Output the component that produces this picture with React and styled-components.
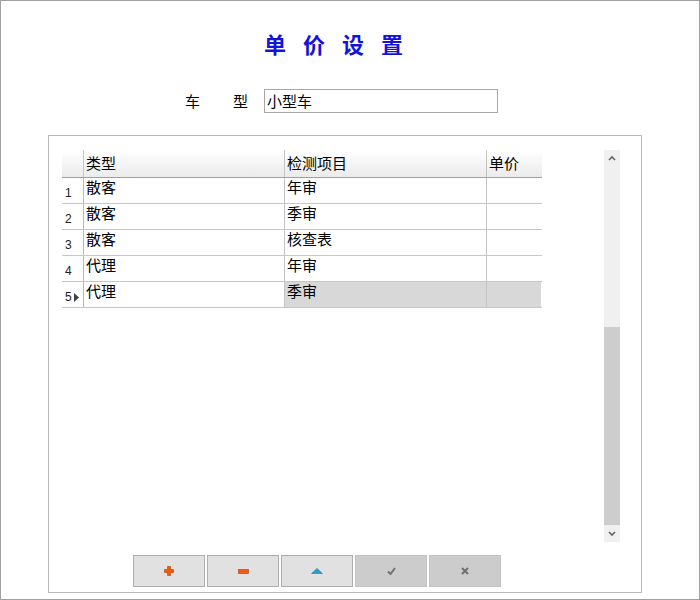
import React from 'react';
import styled, { createGlobalStyle } from 'styled-components';

const GlobalStyle = createGlobalStyle`
  html, body {
    margin: 0;
    padding: 0;
    background: #ffffff;
  }
  body {
    font-family: "Noto Sans CJK SC", "Liberation Sans", sans-serif;
    color: #000000;
  }
`;

const Page = styled.div`
  width: 700px;
  height: 600px;
  box-sizing: border-box;
  border: 1px solid #a0a0a0;
  background: #ffffff;
  display: flex;
  flex-direction: column;
`;

const Title = styled.h1`
  margin: 31px 0 0 263px;
  font-family: "Noto Sans CJK SC", sans-serif;
  font-size: 22px;
  line-height: 22px;
  font-weight: 700;
  letter-spacing: 6px;
  color: #1414d6;
  white-space: pre;
`;

const FormRow = styled.div`
  margin: 35px 0 0 184px;
  display: flex;
  align-items: center;
`;

const Label = styled.span`
  font-size: 15px;
  line-height: 18px;
  letter-spacing: 1px;
  width: 79px;
  white-space: pre;
`;

const TextInput = styled.div`
  box-sizing: border-box;
  width: 234px;
  height: 24px;
  border: 1px solid #a8a8a8;
  padding: 0 2px;
  font-size: 15px;
  line-height: 21px;
`;

const Panel = styled.div`
  margin: 22px 0 0 47px;
  width: 594px;
  height: 458px;
  box-sizing: border-box;
  border: 1px solid #b9b9b9;
  padding: 14px 21px 5px 13px;
  display: flex;
  flex-direction: column;
`;

const GridArea = styled.div`
  display: flex;
  height: 392px;
`;

const GridBody = styled.div`
  flex: 1;
`;

const Row = styled.div`
  display: flex;
  width: 480px;
  height: ${p => (p.$header ? 27 : 25)}px;
  border-bottom: 1px solid ${p => (p.$header ? '#a0a0a0' : '#c6c6c6')};
  background: ${p => (p.$header ? 'linear-gradient(#ffffff, #ebebeb)' : '#ffffff')};
`;

const Indicator = styled.div`
  width: 22px;
  flex-shrink: 0;
  border-right: 1px solid ${p => (p.$header ? '#c8c8c8' : '#b8b8b8')};
  display: flex;
  align-items: flex-end;
  padding: 0 0 4px 3px;
  box-sizing: border-box;
  font-family: "Liberation Sans", sans-serif;
  font-size: 12px;
  line-height: 12px;
  color: #202020;
  gap: 2px;
`;

const Cell = styled.div`
  width: ${p => p.$w}px;
  flex-shrink: 0;
  box-sizing: border-box;
  border-right: ${p => (p.$last ? 'none' : '1px solid #c4c4c4')};
  background: ${p => (p.$selected ? '#d8d8d8' : 'transparent')};
  padding: ${p => (p.$header ? '4px 0 0 2px' : '0 0 0 2px')};
  font-size: 15px;
  line-height: 18px;
  white-space: nowrap;
`;

const ScrollBar = styled.div`
  width: 16px;
  background: #f0f0f0;
  display: flex;
  flex-direction: column;
`;

const ScrollArrow = styled.div`
  height: 17px;
  display: flex;
  align-items: center;
  justify-content: center;
`;

const ScrollSpace = styled.div`
  flex: 1;
`;

const ScrollThumb = styled.div`
  height: 198px;
  background: #cdcdcd;
`;

const ButtonBar = styled.div`
  margin: 13px 0 0 71px;
  display: flex;
  gap: 2px;
`;

const ToolButton = styled.button`
  width: 72px;
  height: 32px;
  box-sizing: border-box;
  margin: 0;
  padding: 0;
  border: 1px solid ${p => (p.disabled ? '#c2c2c2' : '#adadad')};
  background: ${p => (p.disabled ? '#cccccc' : '#e1e1e1')};
  display: flex;
  align-items: center;
  justify-content: center;
`;

const Chevron = ({ down }) => (
  <svg width="8" height="5" viewBox="0 0 8 5">
    <polyline
      points={down ? '1,1 4,4 7,1' : '1,4 4,1 7,4'}
      fill="none"
      stroke="#606060"
      strokeWidth="1.6"
    />
  </svg>
);

const PlusIcon = () => (
  <svg width="10" height="10" viewBox="0 0 10 10">
    <path d="M3.5 0.5h3v3h3v3h-3v3h-3v-3h-3v-3h3z" fill="#f05a10" stroke="#c03a00" strokeWidth="0.6" />
  </svg>
);

const MinusIcon = () => (
  <svg width="11" height="5" viewBox="0 0 11 5">
    <rect x="0.5" y="0.5" width="10" height="4" fill="#f05a10" stroke="#c03a00" strokeWidth="0.6" />
  </svg>
);

const UpIcon = () => (
  <svg width="12" height="6" viewBox="0 0 12 6">
    <path d="M0.5 5.5L6 0.5L11.5 5.5z" fill="#2aa0c8" stroke="#1a7fa4" strokeWidth="0.6" />
  </svg>
);

const CheckIcon = () => (
  <svg width="9" height="8" viewBox="0 0 9 8">
    <polyline points="1,4.5 3.5,7 8,1" fill="none" stroke="#707070" strokeWidth="2" />
  </svg>
);

const CrossIcon = () => (
  <svg width="8" height="8" viewBox="0 0 8 8">
    <path d="M1 1L7 7M7 1L1 7" stroke="#707070" strokeWidth="2" />
  </svg>
);

const rows = [
  ['散客', '年审', ''],
  ['散客', '季审', ''],
  ['散客', '核查表', ''],
  ['代理', '年审', ''],
  ['代理', '季审', ''],
];

const widths = [201, 202, 54];

export default function App() {
  const current = 4;

  return (
    <Page>
      <GlobalStyle />
      <Title>{'单 价 设 置'}</Title>
      <FormRow>
        <Label>{'车　　型'}</Label>
        <TextInput>{'小型车'}</TextInput>
      </FormRow>
      <Panel>
        <GridArea>
          <GridBody>
            <Row $header>
              <Indicator $header />
              <Cell $header $w={widths[0]}>{'类型'}</Cell>
              <Cell $header $w={widths[1]}>{'检测项目'}</Cell>
              <Cell $header $last $w={widths[2]}>{'单价'}</Cell>
            </Row>
            {rows.map((r, i) => (
              <Row key={i}>
                <Indicator>
                  <span>{i + 1}</span>
                  {i === current && (
                    <svg width="5" height="9" viewBox="0 0 5 9" style={{ marginBottom: '1px' }}>
                      <path d="M0 0L5 4.5L0 9z" fill="#404040" />
                    </svg>
                  )}
                </Indicator>
                <Cell $w={widths[0]}>{r[0]}</Cell>
                <Cell $w={widths[1]} $selected={i === current}>{r[1]}</Cell>
                <Cell $last $w={widths[2]} $selected={i === current}>{r[2]}</Cell>
              </Row>
            ))}
          </GridBody>
          <ScrollBar>
            <ScrollArrow><Chevron /></ScrollArrow>
            <ScrollSpace />
            <ScrollThumb />
            <ScrollArrow><Chevron down /></ScrollArrow>
          </ScrollBar>
        </GridArea>
        <ButtonBar>
          <ToolButton><PlusIcon /></ToolButton>
          <ToolButton><MinusIcon /></ToolButton>
          <ToolButton><UpIcon /></ToolButton>
          <ToolButton disabled><CheckIcon /></ToolButton>
          <ToolButton disabled><CrossIcon /></ToolButton>
        </ButtonBar>
      </Panel>
    </Page>
  );
}
